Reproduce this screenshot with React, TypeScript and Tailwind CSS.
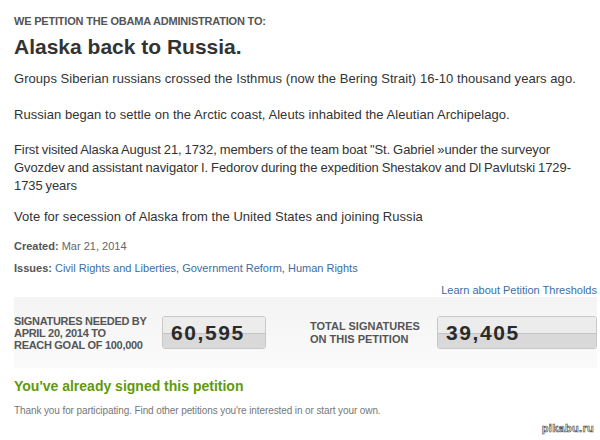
import React from 'react'

const FONT = "font-['Liberation_Sans',Arial,sans-serif]"

function Counter({ value, width }: { value: string; width: string }) {
  return (
    <div className={`relative h-[33px] ${width} rounded-[3px] border border-[#c8c8c8] overflow-hidden`}>
      <div className="absolute inset-x-0 top-0 h-1/2 bg-[#ececec]" />
      <div className="absolute inset-x-0 bottom-0 h-1/2 bg-[#d9d9d9] border-t border-[#c4c4c4]" />
      <span className="relative block pl-[8px] text-[21px] leading-[31px] font-bold tracking-[1.6px] text-[#2a2a2a]">
        {value}
      </span>
    </div>
  )
}

export default function App() {
  return (
    <div className={`w-[600px] h-[440px] bg-white overflow-hidden ${FONT} relative`}>
      <div className="pl-[14px] pr-[3px] pt-[15px]">
        <p className="text-[11px] font-bold text-[#555] leading-[13px] uppercase tracking-[-0.2px]">
          We petition the Obama Administration to:
        </p>
        <h1 className="mt-[6px] text-[21px] font-bold text-[#333] leading-[26px]">Alaska back to Russia.</h1>

        <div className="mt-[10px] w-[580px] text-[13px] leading-[18px] text-[#333] tracking-[0.05px]">
          <p>Groups Siberian russians crossed the Isthmus (now the Bering Strait) 16-10 thousand years ago.</p>
          <p className="mt-[18px]">Russian began to settle on the Arctic coast, Aleuts inhabited the Aleutian Archipelago.</p>
          <p className="mt-[17px] whitespace-nowrap tracking-[-0.1px] [word-spacing:-0.5px]">
            First visited Alaska August 21, 1732, members of the team boat "St. Gabriel »under the surveyor
            <br />
            Gvozdev and assistant navigator I. Fedorov during the expedition Shestakov and Dl Pavlutski 1729-
            <br />
            1735 years
          </p>
          <p className="mt-[13px]">Vote for secession of Alaska from the United States and joining Russia</p>
        </div>

        <p className="mt-[13px] text-[11px] leading-[14px] text-[#666]">
          <span className="font-bold text-[#555]">Created:</span> Mar 21, 2014
        </p>
        <p className="mt-[8px] text-[11px] leading-[14px] text-[#555]">
          <span className="font-bold">Issues:</span>{' '}
          <span className="text-[#3a6ea5]">Civil Rights and Liberties</span>,{' '}
          <span className="text-[#3a6ea5]">Government Reform</span>,{' '}
          <span className="text-[#3a6ea5]">Human Rights</span>
        </p>

        <p className="mt-[8px] text-right text-[11px] leading-[14px] text-[#3a6ea5]">Learn about Petition Thresholds</p>

        <div className="h-[71px] bg-gradient-to-b from-[#f4f4f4] to-[#fafafa] flex items-center">
          <p className="w-[148px] text-[11px] leading-[12px] font-bold text-[#555] uppercase tracking-[-0.3px]">
            Signatures needed by
            <br />
            April 20, 2014 to
            <br />
            reach goal of 100,000
          </p>
          <Counter value="60,595" width="w-[104px]" />
          <p className="ml-[44px] w-[127px] text-[11px] leading-[13px] font-bold text-[#555] uppercase">
            Total signatures on this petition
          </p>
          <Counter value="39,405" width="w-[160px]" />
        </div>

        <h2 className="mt-[9px] text-[14px] font-bold leading-[18px] text-[#5f9a0c]">You've already signed this petition</h2>
        <p className="mt-[9px] text-[10px] leading-[13px] text-[#777] tracking-[-0.1px]">
          Thank you for participating. Find other petitions you're interested in or start your own.
        </p>
      </div>

      <span className="absolute right-[6px] bottom-[6px] text-[11px] font-bold leading-none text-white [-webkit-text-stroke:0.6px_#444] tracking-[0.3px]">
        pikabu.ru
      </span>
    </div>
  )
}
